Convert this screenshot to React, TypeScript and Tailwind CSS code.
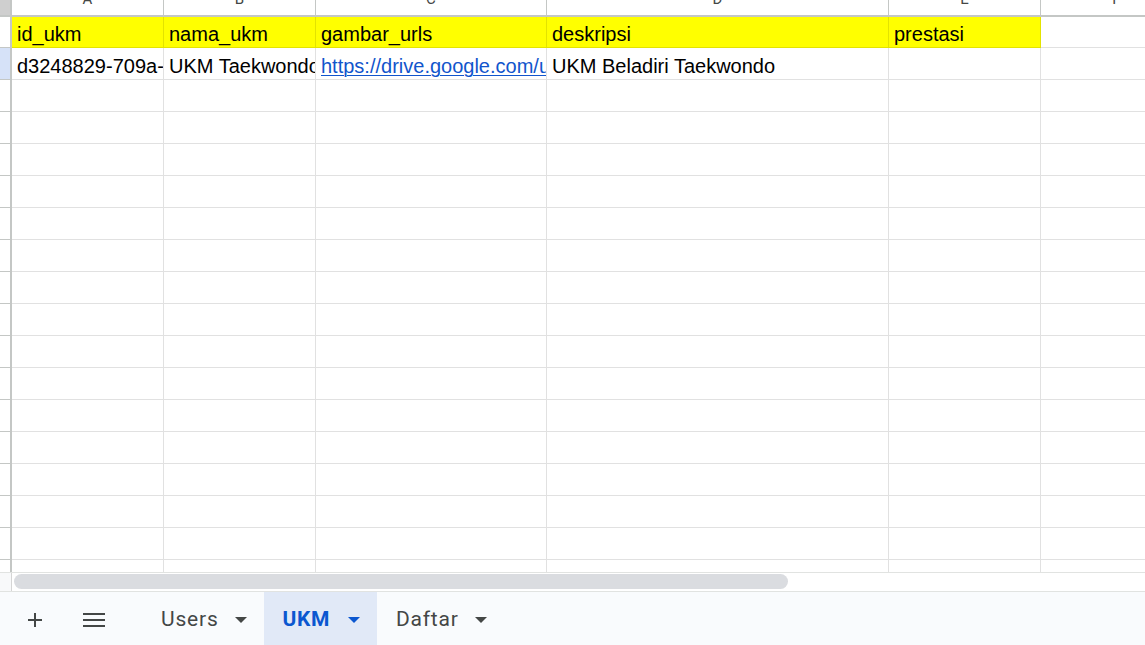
import React from "react";

const COLS = [
  { letter: "A", w: "w-[152px]" },
  { letter: "B", w: "w-[152px]" },
  { letter: "C", w: "w-[231px]" },
  { letter: "D", w: "w-[342px]" },
  { letter: "E", w: "w-[152px]" },
  { letter: "F", w: "w-[152px]" },
];

const HEAD = ["id_ukm", "nama_ukm", "gambar_urls", "deskripsi", "prestasi"];

function Caret({ color }: { color: string }) {
  return (
    <svg width="12" height="6" viewBox="0 0 12 6" className="shrink-0">
      <path d="M0 0 L12 0 L6 6 Z" fill={color} />
    </svg>
  );
}

function Tab({ label, active }: { label: string; active?: boolean }) {
  return (
    <div
      className={
        active
          ? "flex h-full items-center gap-[18px] bg-[#e1e9f7] pl-[19px] pr-[17px] pt-[2px] text-[21px] font-bold tracking-[0.6px] text-[#0b57d0]"
          : "flex h-full items-center gap-[16px] pl-[19px] pr-[17px] pt-[2px] text-[21px] font-normal tracking-[0.8px] text-[#444746]"
      }
    >
      <span className="leading-none">{label}</span>
      <Caret color={active ? "#0b57d0" : "#444746"} />
    </div>
  );
}

function EmptyRow({ h }: { h: string }) {
  return (
    <div className={`flex ${h} shrink-0`}>
      <div className="w-[12px] shrink-0 border-b border-r-2 border-b-[#c4c7c5] border-r-[#c4c7c5] bg-white" />
      {COLS.map((c) => (
        <div key={c.letter} className={`${c.w} shrink-0 border-b border-r border-[#e1e1e1]`} />
      ))}
    </div>
  );
}

export default function App() {
  const cellText =
    "flex items-end overflow-hidden whitespace-nowrap pl-[5px] pb-[1px] text-[20px] leading-[23px] text-black";
  return (
    <div
      className="flex h-[645px] w-[1145px] flex-col overflow-hidden bg-white"
      style={{ fontFamily: '"Liberation Sans", Arial, sans-serif' }}
    >
      <div className="flex flex-1 flex-col overflow-hidden">
        {/* column header */}
        <div className="flex h-[17px] shrink-0 border-b-2 border-[#c4c7c5]">
          <div className="w-[12px] shrink-0 border-r-2 border-[#c4c7c5] bg-[#cfcfcf]" />
          {COLS.map((c) => (
            <div
              key={c.letter}
              className={`${c.w} shrink-0 overflow-hidden border-r border-[#c4c7c5] bg-white text-center`}
            >
              <div
                className="-mt-[8px] text-[15px] leading-[15px] text-[#444746]"
                style={{ fontFamily: "Roboto, Arial, sans-serif" }}
              >
                {c.letter}
              </div>
            </div>
          ))}
        </div>

        {/* row 1 - yellow header */}
        <div className="flex h-[31px] shrink-0">
          <div className="w-[12px] shrink-0 border-b border-r-2 border-b-[#c4c7c5] border-r-[#c4c7c5] bg-white" />
          {COLS.slice(0, 5).map((c, i) => (
            <div
              key={c.letter}
              className={`${c.w} shrink-0 border-b border-r border-[#e3e300] bg-[#ffff00] ${cellText}`}
            >
              {HEAD[i]}
            </div>
          ))}
          <div className="w-[152px] shrink-0 border-b border-r border-[#e1e1e1]" />
        </div>

        {/* row 2 - data */}
        <div className="flex h-[32px] shrink-0">
          <div className="w-[12px] shrink-0 border-b border-r-2 border-b-[#c4c7c5] border-r-[#c4c7c5] bg-[#d6e2f8]" />
          <div className={`w-[152px] shrink-0 border-b border-r border-[#e1e1e1] ${cellText}`}>
            d3248829-709a-4c1e-9b2f-1a2b3c4d5e6f
          </div>
          <div className={`w-[152px] shrink-0 border-b border-r border-[#e1e1e1] ${cellText}`}>
            UKM Taekwondo
          </div>
          <div className={`w-[231px] shrink-0 border-b border-r border-[#e1e1e1] ${cellText}`}>
            <span className="text-[#1155cc] underline decoration-1 underline-offset-[2px]">
              https://drive.google.com/uc?export=view&amp;id=1
            </span>
          </div>
          <div className={`w-[342px] shrink-0 border-b border-r border-[#e1e1e1] ${cellText}`}>
            UKM Beladiri Taekwondo
          </div>
          <div className="w-[152px] shrink-0 border-b border-r border-[#e1e1e1]" />
          <div className="w-[152px] shrink-0 border-b border-r border-[#e1e1e1]" />
        </div>

        {Array.from({ length: 15 }).map((_, i) => (
          <EmptyRow key={i} h="h-[32px]" />
        ))}
        <EmptyRow h="h-[32px]" />
      </div>

      {/* horizontal scroll area */}
      <div className="flex h-[19px] shrink-0 border-t border-[#e1e3e1] bg-white">
        <div className="w-[12px] shrink-0 border-r border-[#d5d5d5] bg-[#f8f9fa]" />
        <div className="flex-1 pl-[2px] pt-[1px]">
          <div className="h-[15px] w-[774px] rounded-full bg-[#dadce0]" />
        </div>
      </div>

      {/* bottom sheet tabs bar */}
      <div
        className="flex h-[54px] shrink-0 items-stretch border-t border-[#e1e3e1] bg-[#f9fbfd]"
        style={{ fontFamily: "Roboto, Arial, sans-serif" }}
      >
        <div className="flex items-center pl-[27px] pt-[2px]">
          <svg width="16" height="16" viewBox="0 0 16 16">
            <path d="M8 1 V15 M1 8 H15" stroke="#444746" strokeWidth="2" />
          </svg>
        </div>
        <div className="flex items-center pl-[40px] pt-[2px]">
          <svg width="22" height="16" viewBox="0 0 22 16">
            <path d="M0 2 H22 M0 8 H22 M0 14 H22" stroke="#444746" strokeWidth="2" />
          </svg>
        </div>
        <div className="ml-[37px] flex">
          <Tab label="Users" />
          <Tab label="UKM" active />
          <Tab label="Daftar" />
        </div>
      </div>
    </div>
  );
}
